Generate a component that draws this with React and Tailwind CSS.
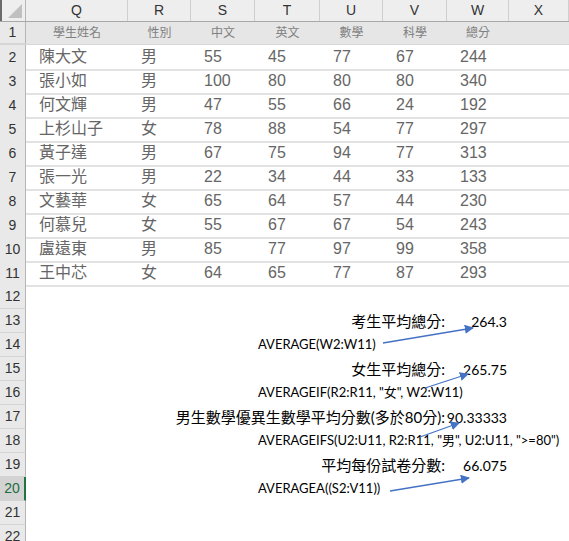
import React from "react";

const cols = ["Q", "R", "S", "T", "U", "V", "W", "X"];

const students = [
  ["陳大文", "男", 55, 45, 77, 67, 244],
  ["張小如", "男", 100, 80, 80, 80, 340],
  ["何文輝", "男", 47, 55, 66, 24, 192],
  ["上杉山子", "女", 78, 88, 54, 77, 297],
  ["黃子達", "男", 67, 75, 94, 77, 313],
  ["張一光", "男", 22, 34, 44, 33, 133],
  ["文藝華", "女", 65, 64, 57, 44, 230],
  ["何慕兒", "女", 55, 67, 67, 54, 243],
  ["盧遠東", "男", 85, 77, 97, 99, 358],
  ["王中芯", "女", 64, 65, 77, 87, 293],
];

const headers = ["學生姓名", "性別", "中文", "英文", "數學", "科學", "總分"];

const grid = "grid grid-cols-[26px_102px_63px_64px_65px_63px_64px_62px_60px]";
const sans = "font-['Liberation_Sans','Noto_Sans_CJK_TC',sans-serif]";
const calibri = "font-['Lato','Noto_Sans_CJK_TC',sans-serif]";

const RowHead = ({ n, selected }) => (
  <div
    className={`flex items-center justify-center border-b border-[#d4d4d4] text-[14px] ${sans} ${
      selected
        ? "bg-[#d3d3d3] text-[#1e6b41] border-r-2 border-r-[#217346]"
        : "bg-[#e9e9e9] text-[#333] border-r border-r-[#b5b5b5]"
    }`}
  >
    {n}
  </div>
);

const Arrows = () => (
  <svg className="absolute left-0 top-0 pointer-events-none" width="569" height="541">
    <defs>
      <marker id="ah" viewBox="0 0 10 10" refX="9" refY="5" markerWidth="7" markerHeight="7" orient="auto">
        <path d="M0 0 L10 5 L0 10 z" fill="#4472c4" />
      </marker>
    </defs>
    <g stroke="#4472c4" strokeWidth="1.3" fill="none" markerEnd="url(#ah)">
      <line x1="383" y1="343" x2="473" y2="328" />
      <line x1="425" y1="388" x2="468" y2="374" />
      <line x1="420" y1="437" x2="459" y2="423" />
      <line x1="390" y1="491" x2="469" y2="478" />
    </g>
  </svg>
);

const LabelRow = ({ n, label, value }) => (
  <div className={`${grid} h-[24px]`}>
    <RowHead n={n} />
    <div className={`col-span-6 flex items-center justify-end pr-[2px] text-[15px] text-black whitespace-nowrap ${calibri}`}>
      {label}
    </div>
    <div className={`flex items-center justify-end pr-[2px] text-[14px] text-black ${calibri}`}>{value}</div>
    <div />
  </div>
);

const FormulaRow = ({ n, formula, selected }) => (
  <div className={`${grid} h-[24px]`}>
    <RowHead n={n} selected={selected} />
    <div />
    <div />
    <div />
    <div className={`col-span-5 flex items-center pl-[3px] text-[13px] text-black whitespace-nowrap ${calibri}`}>
      {formula}
    </div>
  </div>
);

const EmptyRow = ({ n }) => (
  <div className={`${grid} h-[24px]`}>
    <RowHead n={n} />
  </div>
);

export default function App() {
  return (
    <div className="relative w-[569px] h-[541px] overflow-hidden bg-white">
      <div className={`${grid} h-[22px] bg-[#eeeeee] border-b border-[#a8a8a8]`}>
        <div className="relative border-r border-[#b5b5b5] border-l-2 border-l-[#6b6b6b]">
          <div className="absolute right-[3px] bottom-[3px] w-0 h-0 border-l-[14px] border-l-transparent border-b-[14px] border-b-[#c0c0c0]" />
        </div>
        {cols.map((c) => (
          <div
            key={c}
            className={`flex items-center justify-center border-r border-[#cfcfcf] text-[14px] text-[#333] ${sans}`}
          >
            {c}
          </div>
        ))}
      </div>

      <div className={`${grid} h-[23px] bg-[#e6e6e6] border-b border-[#d6d6d6]`}>
        <RowHead n={1} />
        {headers.map((h) => (
          <div key={h} className={`flex items-center justify-center text-[12px] text-[#7f7f7f] ${sans}`}>
            {h}
          </div>
        ))}
        <div />
      </div>

      {students.map((s, i) => (
        <div key={s[0]} className={`${grid} h-[24px] bg-white`}>
          <RowHead n={i + 2} />
          {s.map((v, j) => (
            <div
              key={j}
              className={`flex items-center pl-[13px] border-b-2 border-[#e2e2e2] text-[16px] text-[#666] ${sans}`}
            >
              {v}
            </div>
          ))}
          <div className="border-b-2 border-[#e2e2e2]" />
        </div>
      ))}

      <EmptyRow n={12} />
      <LabelRow n={13} label="考生平均總分:" value="264.3" />
      <FormulaRow n={14} formula="AVERAGE(W2:W11)" />
      <LabelRow n={15} label="女生平均總分:" value="265.75" />
      <FormulaRow n={16} formula={'AVERAGEIF(R2:R11, "女", W2:W11)'} />
      <LabelRow n={17} label="男生數學優異生數學平均分數(多於80分):" value="90.33333" />
      <FormulaRow n={18} formula={'AVERAGEIFS(U2:U11, R2:R11, "男", U2:U11, ">=80")'} />
      <LabelRow n={19} label="平均每份試卷分數:" value="66.075" />
      <FormulaRow n={20} formula="AVERAGEA((S2:V11))" selected />
      <EmptyRow n={21} />
      <EmptyRow n={22} />

      <Arrows />
    </div>
  );
}
